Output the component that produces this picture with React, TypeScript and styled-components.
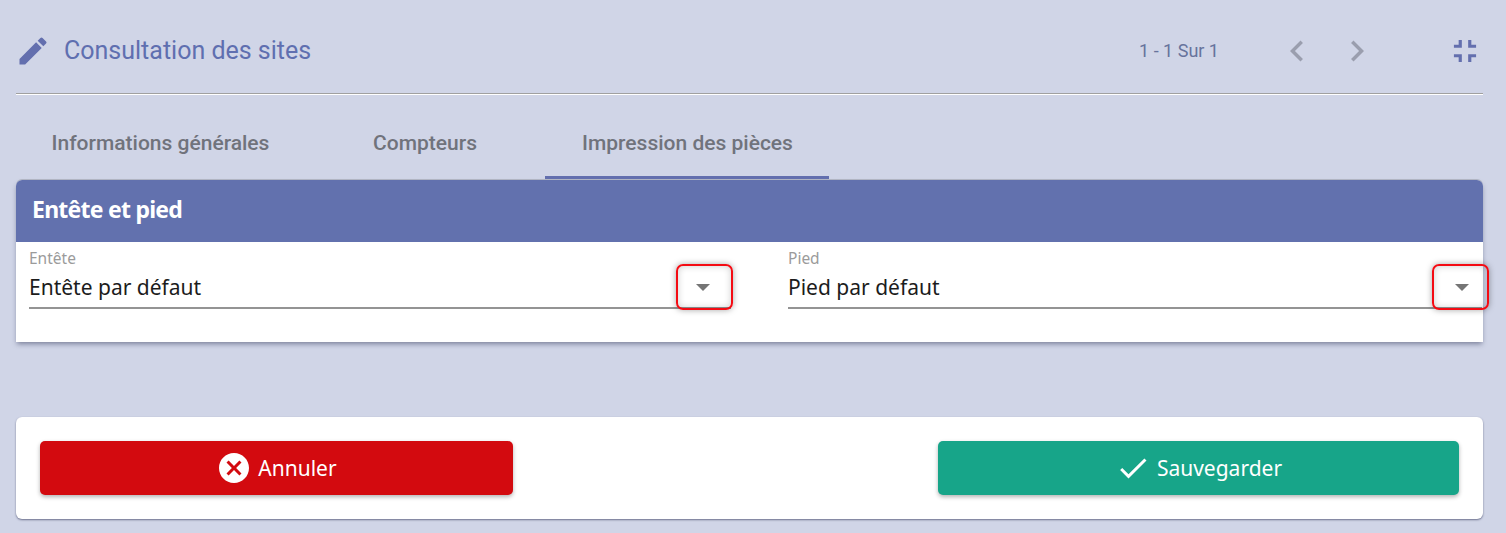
import React from 'react';
import styled, { createGlobalStyle } from 'styled-components';

const GlobalStyle = createGlobalStyle`
  html, body {
    margin: 0;
    padding: 0;
    background: #d0d5e7;
    font-family: 'Noto Sans', sans-serif;
  }
  * {
    box-sizing: border-box;
  }
`;

const Page = styled.div`
  width: 1506px;
  height: 533px;
  padding: 0 23px 0 16px;
  overflow: hidden;
  background: #d0d5e7;
`;

const Header = styled.header`
  height: 95px;
  display: flex;
  align-items: center;
  padding-top: 7px;
  border-bottom: 1px solid #fff;
  box-shadow: inset 0 -1px 0 #a0a0a0;
`;

const PageIcon = styled.svg`
  width: 36px;
  height: 36px;
  margin-left: -1px;
  fill: #636fae;
`;

const PageTitle = styled.h1`
  margin: 0 0 0 13px;
  font-family: Roboto, sans-serif;
  font-size: 25px;
  font-weight: 400;
  color: #5f6fb0;
  flex: 1;
`;

const Pager = styled.span`
  font-family: Roboto, sans-serif;
  font-size: 18px;
  color: #67739c;
  margin-right: 57px;
`;

const NavIcon = styled.svg`
  width: 42px;
  height: 42px;
  fill: #9a9eae;
  margin-right: 18px;
`;

const CollapseIcon = styled.svg`
  width: 38px;
  height: 38px;
  fill: #636fae;
  margin-left: 50px;
  margin-right: -1px;
`;

const Tabs = styled.nav`
  display: flex;
  height: 85px;
  padding-top: 12px;
`;

const Tab = styled.div<{ $active?: boolean; $width: number }>`
  width: ${(p) => p.$width}px;
  height: 72px;
  display: flex;
  align-items: center;
  justify-content: center;
  padding: 3px 0 0 1px;
  font-family: Roboto, sans-serif;
  font-size: 21px;
  font-weight: 500;
  color: #70737c;
  border-bottom: 3px solid ${(p) => (p.$active ? '#636fae' : 'transparent')};
`;

const Card = styled.section`
  height: 162px;
  background: #fff;
  border-radius: 6px 6px 0 0;
  box-shadow: 0 3px 5px -1px rgba(40, 45, 80, 0.5), 0 -1px 0 #b4b8c6;
`;

const CardHeader = styled.h2`
  margin: 0;
  height: 62px;
  padding: 0 15px 4px 16px;
  display: flex;
  align-items: center;
  background: #6271ae;
  border-radius: 6px 6px 0 0;
  color: #fff;
  font-size: 23px;
  font-weight: 700;
  letter-spacing: -0.75px;
`;

const Fields = styled.div`
  display: flex;
  padding: 7px 0 0 13px;
`;

const Field = styled.div<{ $width: number; $gap: number }>`
  position: relative;
  width: ${(p) => p.$width}px;
  margin-right: ${(p) => p.$gap}px;
  height: 60px;
  border-bottom: 2px solid #949494;
`;

const FieldLabel = styled.label`
  display: block;
  height: 18px;
  font-size: 15.5px;
  line-height: 18px;
  color: #9b9b9b;
`;

const FieldValue = styled.div`
  margin-top: 5px;
  font-size: 21px;
  line-height: 30px;
  color: #1c1c1c;
`;

const Arrow = styled.span<{ $right: number }>`
  position: absolute;
  right: ${(p) => p.$right}px;
  top: 35px;
  width: 0;
  height: 0;
  border-left: 7.500px solid transparent;
  border-right: 7.500px solid transparent;
  border-top: 7.500px solid #757575;
`;

const Highlight = styled.span<{ $right: number }>`
  position: absolute;
  right: ${(p) => p.$right}px;
  top: 15px;
  width: 57px;
  height: 46px;
  border: 2px solid #f40b13;
  border-radius: 7px;
  box-shadow: 0 0 6px rgba(0, 0, 0, 0.35), inset 0 0 7px rgba(0, 0, 0, 0.2);
`;

const Footer = styled.footer`
  margin-top: 75px;
  height: 102px;
  padding: 24px;
  display: flex;
  justify-content: space-between;
  background: #fff;
  border-radius: 6px;
  box-shadow: 0 1px 2px rgba(40, 45, 80, 0.6);
`;

const ActionButton = styled.button<{ $color: string; $width: number }>`
  width: ${(p) => p.$width}px;
  height: 54px;
  border: none;
  border-radius: 5px;
  display: flex;
  align-items: center;
  justify-content: center;
  gap: 6px;
  padding: 0;
  background: ${(p) => p.$color};
  color: #fff;
  font-family: 'Noto Sans', sans-serif;
  font-size: 21px;
  box-shadow: 0 2px 4px rgba(0, 0, 0, 0.3);
`;

const ButtonIcon = styled.svg`
  width: 36px;
  height: 36px;
  fill: #fff;
`;

const App: React.FC = () => (
  <Page>
    <GlobalStyle />
    <Header>
      <PageIcon viewBox="0 0 24 24">
        <path d="M3 17.25V21h3.75L17.81 9.94l-3.75-3.75L3 17.25zM20.71 7.04a1 1 0 0 0 0-1.41l-2.34-2.34a1 1 0 0 0-1.41 0l-1.83 1.83 3.75 3.75 1.83-1.83z" />
      </PageIcon>
      <PageTitle>Consultation des sites</PageTitle>
      <Pager>1 - 1 Sur 1</Pager>
      <NavIcon viewBox="0 0 24 24">
        <path d="M15.41 7.41 14 6l-6 6 6 6 1.41-1.41L10.83 12z" />
      </NavIcon>
      <NavIcon viewBox="0 0 24 24">
        <path d="M10 6 8.59 7.41 13.17 12l-4.58 4.59L10 18l6-6z" />
      </NavIcon>
      <CollapseIcon viewBox="0 0 24 24">
        <path d="M5 16h3v3h2v-5H5v2zm3-8H5v2h5V5H8v3zm6 11h2v-3h3v-2h-5v5zm2-11V5h-2v5h5V8h-3z" />
      </CollapseIcon>
    </Header>

    <Tabs>
      <Tab $width={288}>Informations générales</Tab>
      <Tab $width={241}>Compteurs</Tab>
      <Tab $width={284} $active>
        Impression des pièces
      </Tab>
    </Tabs>

    <Card>
      <CardHeader>Entête et pied</CardHeader>
      <Fields>
        <Field $width={702} $gap={57}>
          <FieldLabel>Entête</FieldLabel>
          <FieldValue>Entête par défaut</FieldValue>
          <Arrow $right={21} />
          <Highlight $right={-2} />
        </Field>
        <Field $width={694} $gap={0}>
          <FieldLabel>Pied</FieldLabel>
          <FieldValue>Pied par défaut</FieldValue>
          <Arrow $right={13} />
          <Highlight $right={-7} />
        </Field>
      </Fields>
    </Card>

    <Footer>
      <ActionButton $color="#d30a0f" $width={473}>
        <ButtonIcon viewBox="0 0 24 24">
          <path d="M12 2C6.470 2 2 6.470 2 12s4.470 10 10 10 10-4.470 10-10S17.530 2 12 2zm5 13.590L15.590 17 12 13.410 8.410 17 7 15.590 10.590 12 7 8.410 8.410 7 12 10.590 15.590 7 17 8.410 13.410 12 17 15.590z" />
        </ButtonIcon>
        Annuler
      </ActionButton>
      <ActionButton $color="#17a589" $width={521}>
        <ButtonIcon viewBox="0 0 24 24">
          <path d="M9 16.170 4.830 12l-1.420 1.410L9 19 21 7l-1.410-1.410z" />
        </ButtonIcon>
        Sauvegarder
      </ActionButton>
    </Footer>
  </Page>
);

export default App;
